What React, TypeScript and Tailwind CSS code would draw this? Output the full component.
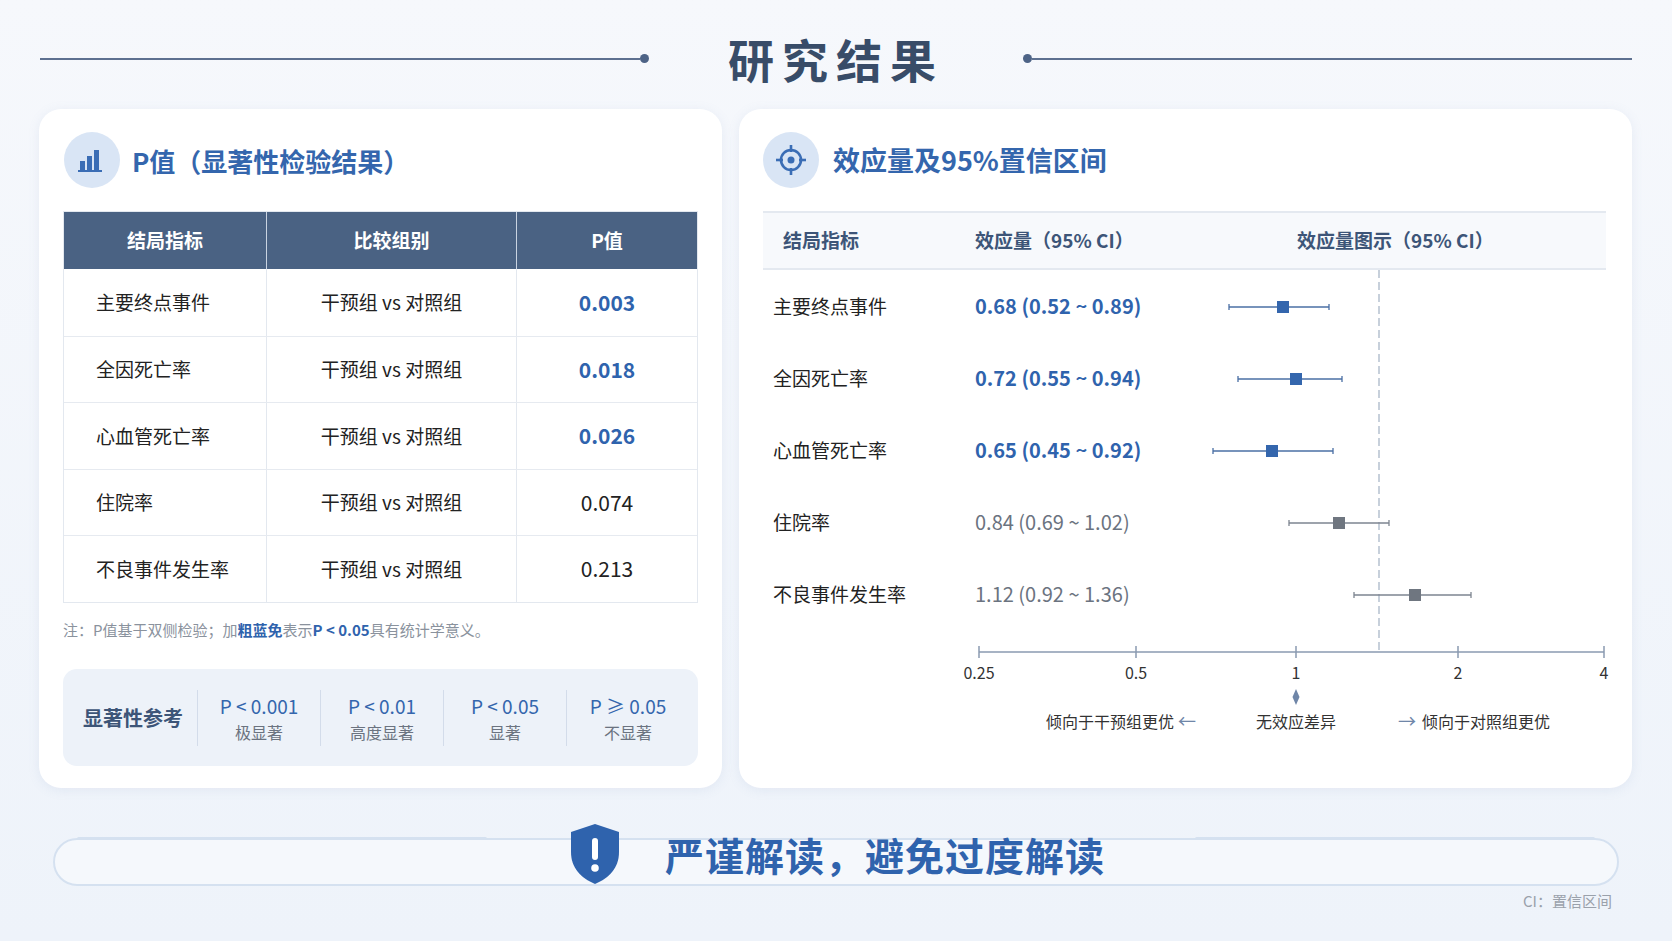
import React from "react";

const pRows = [
  { name: "主要终点事件", p: "0.003", sig: true },
  { name: "全因死亡率", p: "0.018", sig: true },
  { name: "心血管死亡率", p: "0.026", sig: true },
  { name: "住院率", p: "0.074", sig: false },
  { name: "不良事件发生率", p: "0.213", sig: false },
];

// x positions are local to the plot svg (page x - 1180)
const effects = [
  { name: "主要终点事件", text: "0.68 (0.52 ~ 0.89)", sig: true, lo: 49, est: 103, hi: 149 },
  { name: "全因死亡率", text: "0.72 (0.55 ~ 0.94)", sig: true, lo: 58, est: 116, hi: 162 },
  { name: "心血管死亡率", text: "0.65 (0.45 ~ 0.92)", sig: true, lo: 33, est: 92, hi: 153 },
  { name: "住院率", text: "0.84 (0.69 ~ 1.02)", sig: false, lo: 109, est: 159, hi: 209 },
  { name: "不良事件发生率", text: "1.12 (0.92 ~ 1.36)", sig: false, lo: 174, est: 235, hi: 291 },
];

const ticks = [
  { x: -201, label: "0.25" },
  { x: -44, label: "0.5" },
  { x: 116, label: "1" },
  { x: 278, label: "2" },
  { x: 424, label: "4" },
];

const font = { fontFamily: '"Noto Sans CJK SC", "Noto Sans", sans-serif' };

function ChartIcon() {
  return (
    <div className="w-[56px] h-[56px] rounded-full bg-[#d9e5f5] flex items-center justify-center shrink-0">
      <svg width="28" height="26" viewBox="0 0 28 26">
        <rect x="2" y="14" width="5" height="10" fill="#3a6db5" />
        <rect x="9" y="9" width="5" height="15" fill="#3a6db5" />
        <rect x="16" y="3" width="5" height="21" fill="#3a6db5" />
        <rect x="0" y="23" width="24" height="2" fill="#3a6db5" />
      </svg>
    </div>
  );
}

function TargetIcon() {
  return (
    <div className="w-[56px] h-[56px] rounded-full bg-[#d9e5f5] flex items-center justify-center shrink-0">
      <svg width="34" height="34" viewBox="0 0 34 34" fill="none" stroke="#3a6db5" strokeWidth="2.6">
        <circle cx="17" cy="17" r="10" />
        <circle cx="17" cy="17" r="3.5" fill="#3a6db5" stroke="none" />
        <line x1="17" y1="2" x2="17" y2="9" />
        <line x1="17" y1="25" x2="17" y2="32" />
        <line x1="2" y1="17" x2="9" y2="17" />
        <line x1="25" y1="17" x2="32" y2="17" />
      </svg>
    </div>
  );
}

function Plot() {
  // plot spans page x 1180..1620, y 270..740 ; local = page - (1180,270)
  return (
    <svg width="440" height="470" viewBox="0 0 440 470" className="shrink-0 overflow-visible">
      <line x1="199" y1="0" x2="199" y2="382" stroke="#aab7c8" strokeWidth="1.3" strokeDasharray="8 4" />
      {effects.map((e, i) => {
        const y = 37 + i * 72;
        const c = e.sig ? "#3466ad" : "#6f7680";
        const lc = e.sig ? "#4a6fa5" : "#7d8590";
        return (
          <g key={i}>
            <line x1={e.lo} y1={y} x2={e.hi} y2={y} stroke={lc} strokeWidth="1.6" />
            <line x1={e.lo} y1={y - 3} x2={e.lo} y2={y + 3} stroke={lc} strokeWidth="1.3" />
            <line x1={e.hi} y1={y - 3} x2={e.hi} y2={y + 3} stroke={lc} strokeWidth="1.3" />
            <rect x={e.est - 6} y={y - 6} width="12" height="12" fill={c} />
          </g>
        );
      })}
      <line x1="-201" y1="382" x2="424" y2="382" stroke="#8a9ab0" strokeWidth="1.6" />
      {ticks.map((t) => (
        <g key={t.label}>
          <line x1={t.x} y1="376" x2={t.x} y2="388" stroke="#8a9ab0" strokeWidth="1.5" />
          <text x={t.x} y="409" textAnchor="middle" fontSize="16" fill="#333" style={font}>
            {t.label}
          </text>
        </g>
      ))}
      <path d="M116 419 L119.5 427 L116 435 L112.5 427 Z" fill="#6f86a8" />
      <text x="-6" y="458" textAnchor="end" fontSize="16" fill="#333" style={font}>
        倾向于干预组更优
      </text>
      <text x="16" y="458" textAnchor="end" fontSize="18" fill="#6f86a8" style={font}>
        ←
      </text>
      <text x="116" y="458" textAnchor="middle" fontSize="16" fill="#333" style={font}>
        无效应差异
      </text>
      <text x="218" y="458" fontSize="18" fill="#6f86a8" style={font}>
        →
      </text>
      <text x="242" y="458" fontSize="16" fill="#333" style={font}>
        倾向于对照组更优
      </text>
    </svg>
  );
}

export default function App() {
  return (
    <div
      className="w-[1672px] h-[941px] overflow-hidden bg-gradient-to-b from-[#f6f8fc] to-[#eef3fa] flex flex-col"
      style={font}
    >
      {/* header */}
      <div className="h-[109px] flex items-center px-[40px] pt-[8px]">
        <div className="flex-1 flex items-center">
          <div className="flex-1 h-[2px] bg-[#5d7090]" />
          <div className="w-[9px] h-[9px] rounded-full bg-[#4d6386]" />
        </div>
        <div className="w-[374px] text-center text-[46px] font-bold tracking-[8px] text-[#384c68]">研究结果</div>
        <div className="flex-1 flex items-center">
          <div className="w-[9px] h-[9px] rounded-full bg-[#4d6386]" />
          <div className="flex-1 h-[2px] bg-[#5d7090]" />
        </div>
      </div>

      {/* cards */}
      <div className="flex gap-[17px] px-[39px] h-[679px]">
        {/* left */}
        <div className="w-[683px] bg-white rounded-[22px] shadow-[0_2px_12px_rgba(120,150,190,0.12)] pt-[23px] px-[24px]">
          <div className="flex items-center gap-[12px] h-[56px] pl-[1px]">
            <ChartIcon />
            <div className="text-[26px] font-bold text-[#3466ad]">P值（显著性检验结果）</div>
          </div>
          <div className="mt-[23px] w-[635px] border border-[#e3e8ef]">
            <div className="flex h-[57px] bg-[#4a6283] text-white text-[19px] font-bold">
              <div className="w-[203px] flex items-center justify-center border-r border-[#c9d3e1]">结局指标</div>
              <div className="w-[250px] flex items-center justify-center border-r border-[#c9d3e1]">比较组别</div>
              <div className="flex-1 flex items-center justify-center">P值</div>
            </div>
            {pRows.map((r, i) => (
              <div key={i} className={`flex h-[66.5px] text-[19px] text-[#222] ${i > 0 ? "border-t border-[#e6eaf0]" : ""}`}>
                <div className="w-[203px] flex items-center pl-[32px] border-r border-[#e3e8ef]">{r.name}</div>
                <div className="w-[250px] flex items-center justify-center border-r border-[#e3e8ef]">干预组 vs 对照组</div>
                <div className={`flex-1 flex items-center justify-center text-[21px] ${r.sig ? "font-bold text-[#2f63ad]" : "text-[#222]"}`}>
                  {r.p}
                </div>
              </div>
            ))}
          </div>
          <div className="mt-[16px] text-[15px] text-[#8a929d]">
            注：P值基于双侧检验；加<span className="font-bold text-[#2f63ad]">粗蓝免</span>表示
            <span className="font-bold text-[#2f63ad]">P &lt; 0.05</span>具有统计学意义。
          </div>
          <div className="mt-[28px] w-[635px] h-[97px] rounded-[14px] bg-[#edf2f9] flex items-center pl-[20px]">
            <div className="w-[114px] text-[20px] font-bold text-[#3d5578]">显著性参考</div>
            {[
              ["P < 0.001", "极显著"],
              ["P < 0.01", "高度显著"],
              ["P < 0.05", "显著"],
              ["P ≥ 0.05", "不显著"],
            ].map(([a, b], i) => (
              <div key={i} className="w-[123px] h-[56px] border-l border-[#d3dcea] flex flex-col items-center justify-center gap-[9px]">
                <div className="text-[19px] text-[#3466ad] leading-none">{a}</div>
                <div className="text-[16px] text-[#6b7380] leading-none">{b}</div>
              </div>
            ))}
          </div>
        </div>

        {/* right */}
        <div className="w-[893px] bg-white rounded-[22px] shadow-[0_2px_12px_rgba(120,150,190,0.12)] pt-[23px] px-[24px]">
          <div className="flex items-center gap-[14px] h-[56px]">
            <TargetIcon />
            <div className="text-[27px] font-bold text-[#3466ad]">效应量及95%置信区间</div>
          </div>
          <div className="mt-[23px] w-[843px] h-[59px] bg-[#f7f9fc] border-t-2 border-b-2 border-[#e4e9f0] flex items-center text-[19px] font-bold text-[#3d5578]">
            <div className="w-[212px] pl-[20px]">结局指标</div>
            <div className="w-[280px]">效应量（95% CI）</div>
            <div className="flex-1 pl-[42px]">效应量图示（95% CI）</div>
          </div>
          <div className="flex">
            <div className="w-[417px] shrink-0">
              {effects.map((e, i) => (
                <div key={i} className="h-[72px] flex items-center text-[19px]">
                  <div className="w-[212px] pl-[10px] text-[#222]">{e.name}</div>
                  <div className={`text-[20px] ${e.sig ? "font-bold text-[#2f63ad]" : "text-[#6b7380]"}`}>{e.text}</div>
                </div>
              ))}
            </div>
            <Plot />
          </div>
        </div>
      </div>

      {/* bottom banner */}
      <div className="relative mt-[30px] mx-[53px] h-[70px]">
        <div className="absolute left-0 right-0 top-[20px] h-[48px] rounded-full border-2 border-[#d5e1f0] bg-white/40" />
        <div className="absolute left-[24px] top-[19px] w-[410px] h-[3px] bg-[#d5e1f0] rounded-full" />
        <div className="absolute right-[24px] top-[19px] w-[400px] h-[3px] bg-[#d5e1f0] rounded-full" />
        <div className="relative flex items-center justify-center gap-[42px] pt-[6px] h-[66px]">
          <svg width="56" height="64" viewBox="0 0 56 64">
            <path d="M28 2 L52 10 V30 C52 46 42 56 28 62 C14 56 4 46 4 30 V10 Z" fill="#2f63ad" />
            <rect x="25" y="16" width="6" height="22" rx="3" fill="white" />
            <circle cx="28" cy="46" r="3.8" fill="white" />
          </svg>
          <div className="text-[39px] font-bold text-[#2f63ad] tracking-[1px]">严谨解读，避免过度解读</div>
        </div>
      </div>
      <div className="mt-[2px] pr-[60px] text-right text-[15px] text-[#9aa1ab]">CI：置信区间</div>
    </div>
  );
}
